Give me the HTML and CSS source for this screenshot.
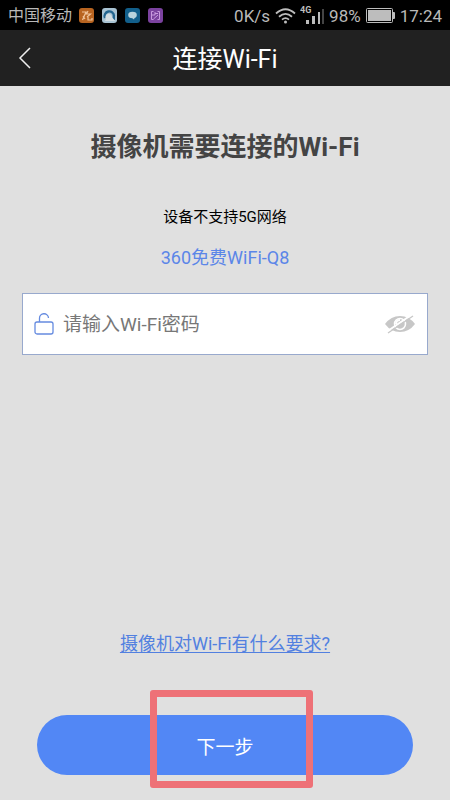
FILE: index.html
```html
<!DOCTYPE html>
<html lang="zh-CN">
<head>
<meta charset="utf-8">
<meta name="viewport" content="width=device-width, initial-scale=1">
<title>连接Wi-Fi</title>
<link rel="stylesheet" href="styles.css">
</head>
<body>
<div class="status">
  <span class="carrier">中国移动</span>
  <div class="apps">
    <svg width="15" height="15" viewBox="0 0 15 15"><rect width="15" height="15" rx="3" fill="#b86420"/><path d="M3 4h4L3.500 12M4 8l2 3M9 3L7.500 6h4L8 9M9 9v3h4v-2" fill="none" stroke="#f0c49a" stroke-width="1.200"/></svg>
    <svg width="15" height="15" viewBox="0 0 15 15"><rect width="15" height="15" rx="3" fill="#a9c3d3"/><path d="M3 10A4.700 4.700 0 1 1 12 8" fill="none" stroke="#23658f" stroke-width="2.400"/><path d="M13 7v5l-3-1 1-4z" fill="#23658f"/><path d="M4 11a3.300 3.300 0 1 1 6-2l3 4H3z" fill="#d3dde2"/></svg>
    <svg width="15" height="15" viewBox="0 0 15 15"><rect width="15" height="15" rx="3" fill="#125f8b"/><ellipse cx="7.500" cy="7" rx="4.300" ry="3.300" fill="#b9d3dd"/><path d="M6 9l3 2.500 1-3z" fill="#b9d3dd"/></svg>
    <svg width="15" height="15" viewBox="0 0 15 15"><rect width="15" height="15" rx="3" fill="#7b429f"/><path d="M5.500 3.500h-2v8h2M9.500 3.500h2v8h-2M7 4v3H4M7 5.500h3M5.500 11l4.500-4" fill="none" stroke="#c99adf"/></svg>
  </div>
  <span class="speed">0K/s</span>
  <svg class="wifi" width="21" height="16" viewBox="0 0 21 16" fill="none" stroke="#bdbdbd" stroke-width="1.800"><path d="M1 5.500Q10.500-3 20 5.500M4 8.700Q10.500 3 17 8.700M7 11.700Q10.500 8.500 14 11.700"/><circle cx="10.500" cy="14" r="1.500" fill="#bdbdbd" stroke="none"/></svg>
  <svg class="signal" width="25" height="24" viewBox="0 0 25 24"><text x="0" y="9" class="network">4G</text><path d="M6 16h3v4H6zM12 12h3v8h-3zM18 8h2v12h-2z" fill="#bdbdbd"/><path d="M22 5h2v15h-2z" fill="#444"/></svg>
  <span class="percent">98%</span>
  <svg class="battery" width="29" height="15" viewBox="0 0 29 15"><rect x=".500" y=".500" width="26" height="14" rx="1" fill="none" stroke="#bdbdbd"/><path d="M2 2h23v11H2zM27 4h1q1 0 1 1v5q0 1-1 1h-1z" fill="#bdbdbd"/></svg>
  <span>17:24</span>
</div>
<header class="bar">
  <button class="back" aria-label="返回"><svg width="14" height="22" viewBox="0 0 14 22" fill="none" stroke="#eee" stroke-width="1.500"><path d="M12 1L2 11l10 10"/></svg></button>
  <h1 class="title">连接Wi-Fi</h1>
</header>
<main class="page">
  <h2 class="heading">摄像机需要连接的Wi-Fi</h2>
  <p class="note">设备不支持5G网络</p>
  <p class="ssid">360免费WiFi-Q8</p>
  <div class="field">
    <label for="password" aria-label="Wi-Fi密码"><svg class="lock" width="20" height="22" viewBox="0 0 20 22" fill="none" stroke="#658be0" stroke-width="1.300"><rect x="1" y="9" width="18" height="12" rx="2"/><path d="M5.500 9V5.500a4.500 4.500 0 0 1 9-.5"/></svg></label>
    <input class="input" id="password" type="password" placeholder="请输入Wi-Fi密码">
    <button class="reveal" aria-label="显示密码"><svg width="30" height="20" viewBox="0 0 30 20"><path d="M0 10Q6 2 15 2t15 8q-6 8-15 8T0 10z" fill="#c7c7c7"/><circle cx="15" cy="10" r="5.500" fill="none" stroke="#fff" stroke-width="1.500"/><path d="M11 10a4 4 0 0 1 4-4" fill="none" stroke="#fff" stroke-width="2"/><path d="M2 17.500L27 .500" stroke="#fff" stroke-width="2"/><path d="M3 19L28 2" stroke="#c7c7c7" stroke-width="1.300"/></svg></button>
  </div>
  <a class="help" href="#requirements">摄像机对Wi-Fi有什么要求?</a>
  <div class="action">
    <button class="next">下一步</button>
    <div class="highlight"></div>
  </div>
</main>
</body>
</html>
```
FILE: styles.css
```css
* { box-sizing: border-box; }
body {
  margin: 0;
  min-height: 100vh;
  display: flex;
  flex-direction: column;
  background: #e0e0e0;
  font-family: Roboto, "Noto Sans CJK SC", sans-serif;
}
svg { display: block; flex: none; }
button { padding: 0; border: 0; background: none; font: inherit; }
h1, h2, p { margin: 0; }

.status {
  height: 30px;
  padding: 1px 8px 0;
  display: flex;
  align-items: center;
  background: #000;
  color: #b9b9b9;
  font-size: 17px;
  line-height: 30px;
  white-space: nowrap;
}
.carrier { font-size: 16px; }
.apps { display: flex; gap: 8px; margin-left: 7px; }
.speed { margin-left: auto; }
.wifi { margin-left: 5px; }
.signal { margin: 0 4px; }
.network { font-size: 9px; font-weight: 700; fill: #bdbdbd; }
.battery { margin: 0 5px; }

.bar {
  height: 56px;
  padding: 0 18px;
  display: grid;
  grid-template-columns: 14px 1fr 14px;
  align-items: center;
  background: #212121;
  color: #fff;
}
.title { padding-top: 4px; font-size: 25px; font-weight: 400; line-height: 52px; text-align: center; }

.page {
  flex: 1;
  padding: 41px 22px 25px;
  display: flex;
  flex-direction: column;
}
.heading { color: #444; font-size: 26px; line-height: 40px; text-align: center; }
.note { margin-top: 35px; color: #000; font-size: 15px; line-height: 30px; text-align: center; }
.ssid { margin-top: 11px; color: #5b86e8; font-size: 18px; line-height: 30px; text-align: center; }
.field {
  height: 62px;
  margin-top: 20px;
  padding: 0 12px 0 11px;
  display: flex;
  align-items: center;
  gap: 9px;
  border: 1px solid #98a9cd;
  background: #fff;
}
.input {
  flex: 1;
  min-width: 0;
  height: 40px;
  padding: 0;
  border: 0;
  outline: 0;
  background: none;
  font: inherit;
  font-size: 19px;
}
.input::placeholder { color: #777; }
.help {
  margin-top: auto;
  align-self: center;
  color: #5280e0;
  font-size: 18px;
  line-height: 30px;
  text-underline-offset: 2px;
  text-decoration-thickness: 1px;
}
.action { position: relative; margin: 56px 15px 0; }
.next {
  display: block;
  width: 100%;
  height: 60px;
  border-radius: 30px;
  background: #5287f5;
  color: #fff;
  font-size: 19px;
}
.highlight {
  position: absolute;
  top: -25px;
  bottom: -13px;
  left: 30%;
  width: 163px;
  border: 7px solid #ee7177;
  border-radius: 3px;
  pointer-events: none;
}
```
